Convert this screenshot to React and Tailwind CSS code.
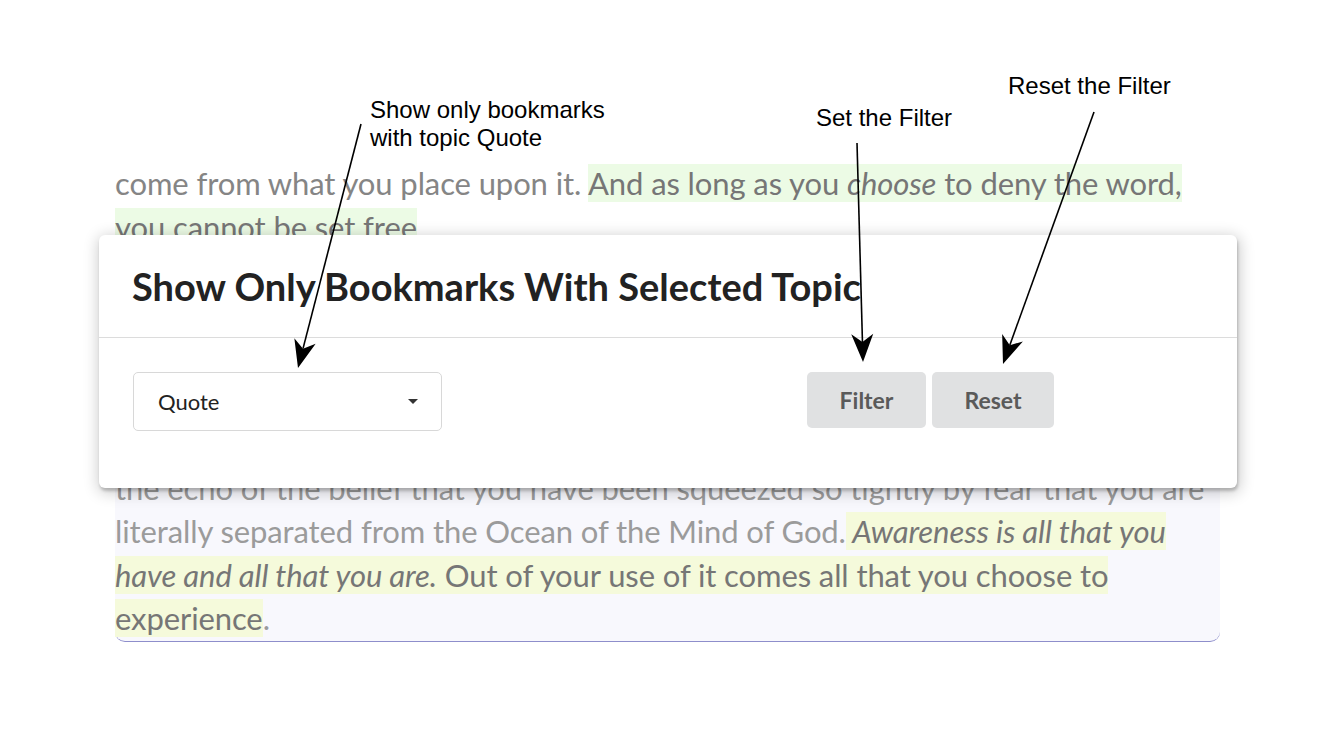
import React from "react";

const arrows = [
  { x1: 361, y1: 124, x2: 298, y2: 368 },
  { x1: 857, y1: 143, x2: 863, y2: 362 },
  { x1: 1094, y1: 112, x2: 1003, y2: 364 },
];

function Arrow({ x1, y1, x2, y2 }) {
  const len = Math.hypot(x2 - x1, y2 - y1);
  const ux = (x2 - x1) / len;
  const uy = (y2 - y1) / len;
  const px = -uy;
  const py = ux;
  const head = 28;
  const half = 11;
  const notch = 8;
  const bx = x2 - ux * head;
  const by = y2 - uy * head;
  const nx = x2 - ux * (head - notch);
  const ny = y2 - uy * (head - notch);
  const pts = [
    [x2, y2],
    [bx + px * half, by + py * half],
    [nx, ny],
    [bx - px * half, by - py * half],
  ]
    .map((p) => p.join(","))
    .join(" ");
  return (
    <g>
      <line x1={x1} y1={y1} x2={nx} y2={ny} stroke="#000" strokeWidth="1.6" />
      <polygon points={pts} fill="#000" />
    </g>
  );
}

const Line = ({ children }) => (
  <div className="h-[43.5px] leading-[43.5px] whitespace-nowrap">{children}</div>
);

const Green = ({ children }) => <span className="bg-[#ecfbe5] text-[#767676]">{children}</span>;
const Yellow = ({ children }) => <span className="bg-[#f5fadb] text-[#767676]">{children}</span>;

export default function App() {
  return (
    <div className="relative w-[1344px] h-[734px] overflow-hidden bg-white font-['Lato','Noto_Sans',sans-serif]">
      {/* page content behind the modal */}
      <div className="pt-[162px] pl-[115px] w-[1220px] text-[31px] tracking-[-0.1px]">
        <div className="text-[#858585]">
          <Line>
            come from what you place upon it. <Green>And as long as you <i>choose</i> to deny the word,</Green>
          </Line>
          <Line>
            <Green>you cannot be set free</Green>.
          </Line>
          <Line>Nothing that you do can change what you are, for what you are was given</Line>
          <Line>to you in your creation and it remains unchanged. Fear is nothing more than</Line>
          <Line>a choice to look away from what is true, and the Self you are is ever present.</Line>
        </div>
        <div className="bg-[#f8f8fd] border-b-[1.5px] border-[#8e8ecb] rounded-b-[10px] text-[#9b9b9b]">
          <Line>You have believed in smallness because you have identified yourself with</Line>
          <Line>the limits of the body, and what you have called your experience is only</Line>
          <Line>the echo of the belief that you have been squeezed so tightly by fear that you are</Line>
          <Line>
            literally separated from the Ocean of the Mind of God.<Yellow><i> Awareness is all that you</i></Yellow>
          </Line>
          <Line>
            <Yellow><i>have and all that you are.</i> Out of your use of it comes all that you choose to</Yellow>
          </Line>
          <Line>
            <Yellow>experience</Yellow>.
          </Line>
        </div>
      </div>

      {/* modal */}
      <div className="absolute left-[99px] top-[235px] w-[1138px] h-[253px] bg-white rounded-[6px] shadow-[1px_3px_3px_0_rgba(0,0,0,0.2),1px_3px_15px_2px_rgba(0,0,0,0.2)]">
        <div className="h-[103px] border-b border-[#dcdcdc] flex items-center px-[33px]">
          <h2 className="text-[38px] font-bold text-[#222]">
            Show Only Bookmarks With Selected Topic
          </h2>
        </div>
        <div className="flex items-start pt-[34px] px-[34px]">
          <div className="w-[309px] h-[59px] border border-[#d8d8d8] rounded-[5px] flex items-center justify-between pl-[24px] pr-[23px]">
            <span className="text-[22px] text-[#222]">Quote</span>
            <span className="w-0 h-0 border-l-[5px] border-r-[5px] border-t-[5px] border-l-transparent border-r-transparent border-t-[#333]" />
          </div>
          <div className="flex gap-[6px] ml-[365px]">
            <button className="w-[119px] h-[56px] rounded-[5px] bg-[#e0e1e2] text-[23px] font-bold text-[#5a5a5a]">
              Filter
            </button>
            <button className="w-[122px] h-[56px] rounded-[5px] bg-[#e0e1e2] text-[23px] font-bold text-[#5a5a5a]">
              Reset
            </button>
          </div>
        </div>
      </div>

      {/* annotations */}
      <div className="absolute left-[370px] top-[96px] text-[24px] leading-[28px] text-black font-['Liberation_Sans',Arial,sans-serif]">
        <div>Show only bookmarks</div>
        <div>with topic Quote</div>
      </div>
      <div className="absolute left-[816px] top-[104px] text-[24px] leading-[28px] text-black font-['Liberation_Sans',Arial,sans-serif]">
        Set the Filter
      </div>
      <div className="absolute left-[1008px] top-[72px] text-[24px] leading-[28px] text-black font-['Liberation_Sans',Arial,sans-serif]">
        Reset the Filter
      </div>
      <svg className="absolute inset-0 pointer-events-none" width="1344" height="734">
        {arrows.map((a, i) => (
          <Arrow key={i} {...a} />
        ))}
      </svg>
    </div>
  );
}
